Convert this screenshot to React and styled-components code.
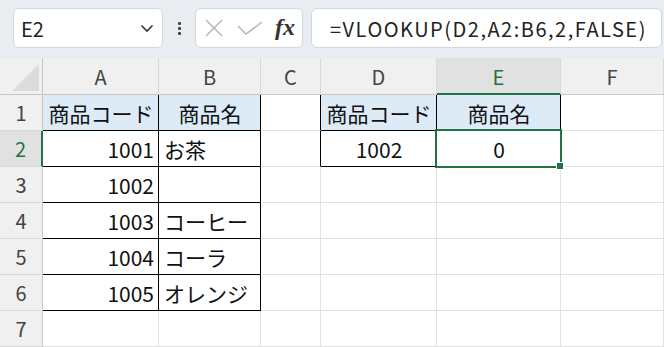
import React from "react";
import styled, { createGlobalStyle } from "styled-components";

const GlobalStyle = createGlobalStyle`
  * { box-sizing: border-box; }
  html, body { margin: 0; padding: 0; background: #ffffff; }
  body {
    font-family: "Noto Sans CJK JP", "Noto Sans", sans-serif;
    overflow: hidden;
  }
`;

const GREEN = "#217346";
const GRID = "#e1e1e1";
const HEAD_LINE = "#c6c6c6";

const columns = ["A", "B", "C", "D", "E", "F"];

// one entry per cell A..F: right / bottom = black border, fill = header blue
const rows = [
  [
    { text: "商品コード", align: "center", fill: true, right: true, bottom: true },
    { text: "商品名", align: "center", fill: true, right: true, bottom: true },
    { right: true },
    { text: "商品コード", align: "center", fill: true, right: true, bottom: true },
    { text: "商品名", align: "center", fill: true, right: true, bottom: true },
    {},
  ],
  [
    { text: "1001", align: "right", right: true, bottom: true },
    { text: "お茶", right: true, bottom: true },
    { right: true },
    { text: "1002", align: "center", right: true, bottom: true },
    { text: "0", align: "center", right: true, bottom: true, selected: true },
    {},
  ],
  [
    { text: "1002", align: "right", right: true, bottom: true },
    { text: "", right: true, bottom: true },
    {}, {}, {}, {},
  ],
  [
    { text: "1003", align: "right", right: true, bottom: true },
    { text: "コーヒー", right: true, bottom: true },
    {}, {}, {}, {},
  ],
  [
    { text: "1004", align: "right", right: true, bottom: true },
    { text: "コーラ", right: true, bottom: true },
    {}, {}, {}, {},
  ],
  [
    { text: "1005", align: "right", right: true, bottom: true },
    { text: "オレンジ", right: true, bottom: true },
    {}, {}, {}, {},
  ],
  [{}, {}, {}, {}, {}, {}],
];

const Page = styled.div`
  width: 664px;
  height: 347px;
  display: flex;
  flex-direction: column;
`;

const Toolbar = styled.div`
  height: 58px;
  flex-shrink: 0;
  background: #e9ecf0;
  display: flex;
  align-items: flex-start;
  padding: 8px 0 0 13px;
  gap: 12px;
`;

const Box = styled.div`
  height: 40px;
  background: #ffffff;
  border: 1px solid #d3d6db;
  border-radius: 6px;
  display: flex;
  align-items: center;
`;

const NameBox = styled(Box)`
  width: 150px;
  padding: 0 8px 0 7px;
  justify-content: space-between;
  font-size: 20px;
  color: #222;
`;

const Dots = styled.div`
  width: 8px;
  height: 40px;
  display: flex;
  flex-direction: column;
  justify-content: center;
  align-items: center;
  gap: 2px;
  & > span {
    width: 3px;
    height: 3px;
    border-radius: 1px;
    background: #444;
  }
`;

const ButtonBox = styled(Box)`
  width: 108px;
  padding: 0 7px 0 8px;
  justify-content: space-between;
`;

const Fx = styled.span`
  font-family: "Liberation Serif", "DejaVu Serif", serif;
  font-style: italic;
  font-weight: bold;
  font-size: 24px;
  color: #333;
  line-height: 1;
  margin-top: -2px;
`;

const FormulaBox = styled(Box)`
  flex: 1;
  margin-right: 2px;
  margin-left: -4px;
  padding-left: 18px;
  font-size: 20px;
  letter-spacing: 1.5px;
  color: #222;
  white-space: nowrap;
`;

const Sheet = styled.div`
  display: grid;
  grid-template-columns: 43px 116px 102px 60px 116px 124px 103px;
  grid-template-rows: 37px repeat(7, 36px);
  font-size: 21px;
  color: #111;
`;

const Corner = styled.div`
  background: #f0f0f0;
  border-right: 1px solid ${HEAD_LINE};
  border-bottom: 1px solid ${HEAD_LINE};
  display: flex;
  align-items: flex-end;
  justify-content: flex-end;
  padding: 0 3px 3px 0;
`;

const ColHeader = styled.div`
  background: ${(p) => (p.$active ? "#e1e1e1" : "#f0f0f0")};
  color: ${(p) => (p.$active ? GREEN : "#444")};
  border-right: 1px solid #d8d8d8;
  border-bottom: ${(p) => (p.$active ? `2px solid ${GREEN}` : `1px solid ${HEAD_LINE}`)};
  display: flex;
  align-items: center;
  justify-content: center;
  font-size: 20px;
  padding-top: ${(p) => (p.$active ? "1px" : "0")};
`;

const RowHeader = styled.div`
  background: ${(p) => (p.$active ? "#e1e1e1" : "#f0f0f0")};
  color: ${(p) => (p.$active ? GREEN : "#444")};
  border-right: ${(p) => (p.$active ? `2px solid ${GREEN}` : `1px solid ${HEAD_LINE}`)};
  border-bottom: 1px solid #d8d8d8;
  display: flex;
  align-items: center;
  justify-content: center;
  font-size: 20px;
`;

const Cell = styled.div`
  position: relative;
  background: ${(p) => (p.$fill ? "#ddebf7" : "#ffffff")};
  border-right: 1px solid ${(p) => (p.$right ? "#000" : GRID)};
  border-bottom: 1px solid ${(p) => (p.$bottom ? "#000" : GRID)};
  display: flex;
  align-items: center;
  justify-content: ${(p) =>
    p.$align === "right" ? "flex-end" : p.$align === "center" ? "center" : "flex-start"};
  padding: 0 4px 0 5px;
  white-space: nowrap;
  z-index: ${(p) => (p.$selected ? 2 : 0)};
`;

const Selection = styled.div`
  position: absolute;
  top: -2px;
  left: -2px;
  right: -2px;
  bottom: -2px;
  border: 2px solid ${GREEN};
  pointer-events: none;
`;

const Handle = styled.div`
  position: absolute;
  right: -4px;
  bottom: -4px;
  width: 8px;
  height: 8px;
  background: ${GREEN};
  border: 1px solid #ffffff;
`;

const Chevron = () => (
  <svg width="14" height="9" viewBox="0 0 14 9">
    <path d="M1.5 1.5 L7 7 L12.5 1.5" fill="none" stroke="#333" strokeWidth="1.6" />
  </svg>
);

const CancelIcon = () => (
  <svg width="20" height="18" viewBox="0 0 20 18">
    <path d="M2 1 L18 17 M18 1 L2 17" stroke="#b4b4b4" strokeWidth="1.4" fill="none" />
  </svg>
);

const CheckIcon = () => (
  <svg width="26" height="14" viewBox="0 0 26 14">
    <path d="M1 5 L9 13 L25 1" stroke="#b4b4b4" strokeWidth="1.4" fill="none" />
  </svg>
);

const CornerTriangle = () => (
  <svg width="27" height="27" viewBox="0 0 27 27">
    <path d="M27 0 L27 27 L0 27 Z" fill="#dcdcdc" />
  </svg>
);

export default function App() {
  return (
    <Page>
      <GlobalStyle />
      <Toolbar>
        <NameBox>
          <span>E2</span>
          <Chevron />
        </NameBox>
        <Dots>
          <span />
          <span />
          <span />
        </Dots>
        <ButtonBox>
          <CancelIcon />
          <CheckIcon />
          <Fx>fx</Fx>
        </ButtonBox>
        <FormulaBox>=VLOOKUP(D2,A2:B6,2,FALSE)</FormulaBox>
      </Toolbar>
      <Sheet>
        <Corner>
          <CornerTriangle />
        </Corner>
        {columns.map((c) => (
          <ColHeader key={c} $active={c === "E"}>
            {c}
          </ColHeader>
        ))}
        {rows.map((row, r) => (
          <React.Fragment key={r}>
            <RowHeader $active={r === 1}>{r + 1}</RowHeader>
            {row.map((cell, c) => (
              <Cell
                key={c}
                $fill={cell.fill}
                $align={cell.align}
                $right={cell.right}
                $bottom={cell.bottom}
                $selected={cell.selected}
              >
                {cell.text}
                {cell.selected && (
                  <Selection>
                    <Handle />
                  </Selection>
                )}
              </Cell>
            ))}
          </React.Fragment>
        ))}
      </Sheet>
    </Page>
  );
}
